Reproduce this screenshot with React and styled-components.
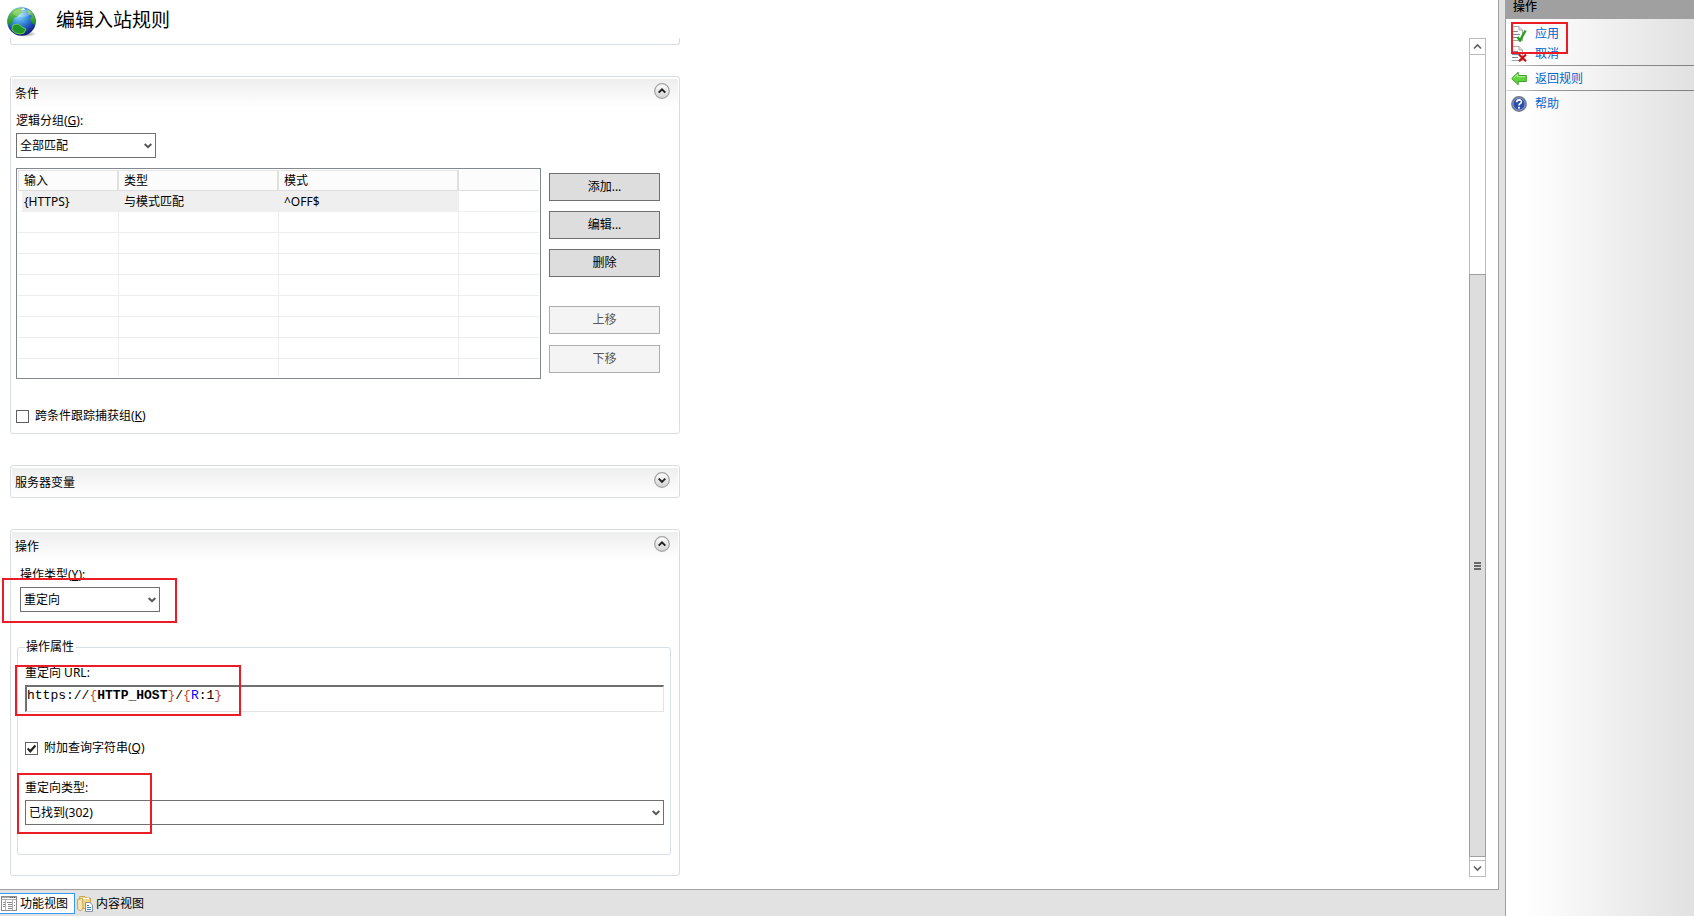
import { useState } from "react";
import { styled, css, createGlobalStyle } from "styled-components";

const GlobalStyle = createGlobalStyle`
    * {
        box-sizing: border-box;
    }

    body {
        margin: 0;
        background-color: rgb(226, 226, 226);
    }

    body, button, input, select {
        font-family: "Noto Sans", "Noto Sans CJK SC", sans-serif;
        font-size: 12px;
        line-height: 16px;
        color: rgb(0, 0, 0);
    }
`

const Shell = styled.div`
    display: flex;
    min-height: 100vh;
`

const Workspace = styled.main`
    flex: 1;
    min-width: 0;
    display: flex;
    flex-direction: column;
`

const Pane = styled.div`
    flex: 1;
    display: flex;
    flex-direction: column;
    margin-right: 6px;
    background-color: rgb(255, 255, 255);
    border-right: 1px solid rgb(160, 160, 160);
    border-bottom: 1px solid rgb(160, 160, 160);
`

const PaneHeader = styled.header`
    display: flex;
    align-items: center;
    gap: 18px;
    height: 38px;
    padding: 2px 0 0 7px;
`

const PaneTitle = styled.h1`
    margin: 0;
    font-size: 19px;
    line-height: 26px;
    font-weight: 400;
`

const Viewport = styled.div`
    flex: 1;
    display: flex;
    justify-content: space-between;
    gap: 12px;
    padding: 0 12px 12px 10px;
`

const Sections = styled.div`
    display: flex;
    flex-direction: column;
    gap: 31px;
    flex: 0 1 670px;
    min-width: 0;
`

const Panel = styled.section`
    padding: 2px 1px 1px;
    border: 1px solid rgb(215, 221, 228);
    border-radius: 3px;
`

// bottom edge of the section that is scrolled out of view
const PanelTail = styled.div`
    height: 7px;
    border: 1px solid rgb(215, 221, 228);
    border-top: none;
    border-radius: 0 0 3px 3px;
`

const PanelHeader = styled.div`
    display: flex;
    justify-content: space-between;
    align-items: flex-start;
    height: 28px;
    padding: 4px 8px 0 3px;
    background: linear-gradient(rgb(238, 238, 238), rgb(255, 255, 255));
`

const PanelTitle = styled.h2`
    margin: 0;
    padding-top: 3px;
    font-size: 12px;
    font-weight: 400;
`

const ToggleButton = styled.button`
    display: flex;
    padding: 0;
    border: none;
    background: none;
    cursor: pointer;
`

const PanelBody = styled.div`
    padding: 6px 18px 8px 4px;

    ${props =>
        props.$wide &&
        css`
        padding: 7px 7px 19px 5px;
    `
    }
`

const Field = styled.div`
    position: relative;

    ${props =>
        props.$indent &&
        css`
        margin-left: 3px;
    `
    }
`

const FieldLabel = styled.label`
    display: block;
    margin-bottom: 4px;
`

const SelectBox = styled.div`
    position: relative;
    width: ${props => (props.$full ? "100%" : "140px")};

    svg {
        position: absolute;
        right: 4px;
        top: 9px;
        pointer-events: none;
    }
`

const SelectControl = styled.select`
    display: block;
    width: 100%;
    height: 25px;
    padding: 0 20px 0 3px;
    appearance: none;
    border: 1px solid rgb(112, 112, 112);
    border-radius: 0;
    background-color: rgb(255, 255, 255);
`

const ConditionRow = styled.div`
    display: flex;
    gap: 8px;
    margin: 10px 0 29px;
`

const TableFrame = styled.div`
    flex: 1;
    min-width: 0;
    padding: 1px;
    border: 1px solid rgb(130, 135, 144);
`

const Table = styled.table`
    width: 100%;
    table-layout: fixed;
    border-collapse: separate;
    border-spacing: 0;
`

const HeadCell = styled.th`
    height: 21px;
    padding: 0 0 0 5px;
    text-align: left;
    font-weight: 400;
    background-color: rgb(252, 252, 252);
    border-top: 1px solid rgb(229, 229, 229);
    border-right: 2px solid rgb(224, 224, 224);
    border-bottom: 1px solid rgb(222, 222, 222);

    &:first-child {
        border-left: 1px solid rgb(229, 229, 229);
    }

    &:last-child {
        border-top-color: rgb(252, 252, 252);
        border-right: none;
    }
`

const Cell = styled.td`
    height: 21px;
    padding: 2px 0 0 5px;
    border-right: 1px solid rgb(237, 237, 237);
    border-bottom: 1px solid rgb(237, 237, 237);

    &:last-child {
        border-right: none;
    }

    tr:last-child > & {
        height: 18px;
        border-bottom: none;
    }

    ${props =>
        props.$selected &&
        css`
        background-color: rgb(239, 239, 239);
        border-color: rgb(239, 239, 239);

        &:first-child {
            padding-left: 2px;
            border-left: 4px solid rgb(255, 255, 255);
        }
    `
    }
`

const ButtonColumn = styled.div`
    display: flex;
    flex-direction: column;
    gap: 10px;
    width: 111px;
    padding-top: 5px;
`

const PushButton = styled.button`
    height: 28px;
    padding: 0;
    border: 1px solid rgb(112, 112, 112);
    background-color: rgb(221, 221, 221);

    &:disabled {
        color: rgb(90, 90, 90);
        border-color: rgb(173, 173, 173);
        background-color: rgb(244, 244, 244);
    }
`

const MoveButtons = styled.div`
    display: flex;
    flex-direction: column;
    gap: 11px;
    margin-top: 19px;

    button {
        width: 100%;
    }
`

const CheckRow = styled.div`
    display: flex;
    align-items: center;
    gap: 6px;
`

const CheckBox = styled.span`
    position: relative;
    display: flex;

    svg {
        position: absolute;
        left: 2px;
        top: 2px;
        display: none;
        pointer-events: none;
    }

    input:checked + svg {
        display: block;
    }
`

const CheckInput = styled.input`
    width: 13px;
    height: 13px;
    margin: 0;
    appearance: none;
    border: 1px solid rgb(96, 96, 96);
    background-color: rgb(255, 255, 255);
`

const Properties = styled.fieldset`
    min-width: 0;
    margin: 27px 0 0;
    padding: 10px 6px 29px 7px;
    border: 1px solid rgb(213, 223, 229);
    border-radius: 3px;
`

const Legend = styled.legend`
    padding: 0 2px 0 1px;
`

const PropertyStack = styled.div`
    display: flex;
    flex-direction: column;
`

const QueryOption = styled.div`
    margin: 28px 0 24px;
`

const UrlBox = styled.div`
    display: grid;
    height: 27px;
    border: 2px solid;
    border-width: 2px 1px 1px 2px;
    border-color: rgb(112, 112, 112) rgb(227, 227, 227) rgb(227, 227, 227) rgb(112, 112, 112);

    > * {
        grid-area: 1 / 1;
        height: 18px;
        padding: 0;
        font-family: "Liberation Mono", monospace;
        font-size: 13px;
        line-height: 18px;
    }
`

const UrlColors = styled.div`
    white-space: pre;

    b {
        font-weight: 700;
    }

    i {
        font-style: normal;
        color: rgb(200, 72, 48);
    }

    em {
        font-style: normal;
        color: rgb(0, 0, 255);
    }
`

const UrlInput = styled.input`
    min-width: 0;
    border: none;
    outline: none;
    background: none;
    color: transparent;
    caret-color: rgb(0, 0, 0);
`

// red outline drawn over a group of controls
const Highlight = styled.div`
    position: absolute;
    z-index: 1;
    left: ${props => props.$left}px;
    top: ${props => props.$top}px;
    width: ${props => props.$width}px;
    height: ${props => props.$height}px;
    border: 2px solid rgb(237, 28, 36);
    pointer-events: none;
`

const ScrollBar = styled.div`
    display: flex;
    flex-direction: column;
    flex: none;
    width: 17px;
    border: 1px solid rgb(187, 187, 187);
`

const ScrollButton = styled.button`
    display: flex;
    align-items: center;
    justify-content: center;
    height: 16px;
    padding: 0;
    border: 0 solid rgb(187, 187, 187);
    border-width: ${props => (props.$up ? "0 0 1px" : "1px 0 0")};
    background-color: rgb(255, 255, 255);
`

const ScrollSpace = styled.div`
    flex: 220;
`

const ScrollThumb = styled.div`
    flex: 582;
    display: flex;
    flex-direction: column;
    align-items: center;
    justify-content: center;
    gap: 1px;
    margin: 0 -1px 3px;
    border: 1px solid rgb(160, 160, 160);
    background-color: rgb(221, 221, 221);
`

const Grip = styled.span`
    width: 7px;
    height: 2px;
    background-color: rgb(104, 104, 104);
`

const ViewTabs = styled.footer`
    display: flex;
    align-items: center;
    gap: 1px;
    height: 26px;
`

const ViewTab = styled.button`
    display: flex;
    align-items: center;
    gap: 3px;
    height: 21px;
    padding: 1px 6px 0 1px;
    border: 1px solid transparent;
    border-left: none;
    background: none;

    ${props =>
        props.$active &&
        css`
        border-color: rgb(51, 153, 255);
        border-left: none;
        background-color: rgb(255, 255, 255);
    `
    }
`

const Sidebar = styled.aside`
    width: 189px;
    flex: none;
    border-left: 1px solid rgb(160, 160, 160);
    background: linear-gradient(to right, rgb(255, 255, 255) 10%, rgb(225, 225, 225));
`

const SidebarTitle = styled.h2`
    height: 19px;
    margin: 0;
    padding-left: 7px;
    font-size: 12px;
    line-height: 14px;
    font-weight: 500;
    background-color: rgb(160, 160, 160);
`

const ActionList = styled.ul`
    margin: 0;
    padding: 4px 0 0;
    list-style: none;
`

const ActionItem = styled.li`
    position: relative;
    padding-left: 5px;

    ${props =>
        props.$divided &&
        css`
        padding-bottom: 2px;
        margin-bottom: 2px;
        border-bottom: 1px solid;
        border-image: linear-gradient(to right, rgb(220, 220, 220), rgb(150, 150, 150) 20%, rgb(128, 128, 128)) 1;
    `
    }
`

const ActionLink = styled.a`
    display: flex;
    align-items: center;
    gap: 8px;
    height: 20px;
    padding-top: 2px;
    color: rgb(0, 102, 204);
    text-decoration: none;
`

const GlobeIcon = () => (
    <svg width="31" height="34" viewBox="0 -4 31 34" aria-hidden="true">
        <defs>
            <radialGradient id="sea" cx="0.4" cy="0.25" r="0.75">
                <stop offset="0" stopColor="#a9e6fb" />
                <stop offset="0.4" stopColor="#4099e2" />
                <stop offset="0.75" stopColor="#1e4cb8" />
                <stop offset="1" stopColor="#101f78" />
            </radialGradient>
            <radialGradient id="shade">
                <stop offset="0" stopColor="#555" stopOpacity="0.7" />
                <stop offset="1" stopColor="#555" stopOpacity="0" />
            </radialGradient>
            <linearGradient id="land" x1="0" y1="0" x2="0" y2="1">
                <stop offset="0" stopColor="#8ad650" />
                <stop offset="1" stopColor="#128a24" />
            </linearGradient>
        </defs>
        <ellipse cx="18" cy="27" rx="12" ry="3" fill="url(#shade)" />
        <circle cx="14.5" cy="14.5" r="14.3" fill="url(#sea)" />
        <path d="M3 7 Q7 1 13 1 L16 2 L14 4 L17 5 L13 7 L11 9 L7 11 L5 16 L2 19 Q-1 13 3 7Z" fill="url(#land)" />
        <path d="M20 2 Q27 5 28.5 13 L28 18 L25 16 L23 12 L25 9 L21 6Z" fill="url(#land)" />
        <path d="M6 18 L11 17 L15 20 L19 22 L17 26 L13 27 Q8 27 5 23Z" fill="#21952d" stroke="#6fc949" strokeWidth="1" />
        <path d="M14 2 L15 3 L18 3 L17 1Z" fill="#f4fbe8" />
        <ellipse cx="15" cy="6" rx="9" ry="4" fill="#fff" opacity="0.25" />
    </svg>
)

const Chevron = () => (
    <svg width="8" height="8" viewBox="0 0 8 8" aria-hidden="true">
        <path d="M0.7 2 L4 5.2 L7.3 2" fill="none" stroke="#555" strokeWidth="2" />
    </svg>
)

const ToggleIcon = ({ open }) => (
    <svg width="16" height="16" viewBox="0 0 16 16" aria-hidden="true">
        <defs>
            <linearGradient id="knob" x1="0" y1="0" x2="0" y2="1">
                <stop offset="0" stopColor="#fff" />
                <stop offset="1" stopColor="#d2d2d2" />
            </linearGradient>
        </defs>
        <circle cx="8" cy="8" r="7.3" fill="url(#knob)" stroke="#a3a3a3" strokeWidth="1.2" />
        <path
            d={open ? "M4.7 9.6 L8 6.3 L11.3 9.6" : "M4.7 6.6 L8 9.9 L11.3 6.6"}
            fill="none"
            stroke="#222"
            strokeWidth="2"
        />
    </svg>
)

const ScrollArrow = ({ up }) => (
    <svg width="9" height="7" viewBox="0 0 9 7" aria-hidden="true">
        <path d={up ? "M1 5.5 L4.5 2 L8 5.5" : "M1 1.5 L4.5 5 L8 1.5"} fill="none" stroke="#606060" strokeWidth="1.6" />
    </svg>
)

const CheckMark = () => (
    <svg width="9" height="9" viewBox="0 0 9 9" aria-hidden="true">
        <path d="M0.6 4.4 L3.3 7.3 L8.4 1.4" fill="none" stroke="#222" strokeWidth="2.2" />
    </svg>
)

const PageShape = () => (
    <>
        <path d="M0.5 0.5 H8 L11.5 4 V14.5 H0.5" fill="#fbfbfb" stroke="#a8a8a8" />
        <path d="M8 0.5 V4 H11.5" fill="#e8e8e8" stroke="#a8a8a8" />
        <path d="M1 5.5 H7 M1 8.5 H9 M1 11.5 H7" stroke="#7588a6" />
    </>
)

const ApplyIcon = () => (
    <svg width="16" height="16" viewBox="0 0 16 16" aria-hidden="true">
        <PageShape />
        <path d="M6.5 11 L9 14.5 L14.5 4.5" fill="none" stroke="#24a51c" strokeWidth="2.4" />
    </svg>
)

const CancelIcon = () => (
    <svg width="16" height="16" viewBox="0 0 16 16" aria-hidden="true">
        <PageShape />
        <path d="M8 8.5 L15 15.3 M15 8.5 L8 15.3" stroke="#cc1111" strokeWidth="2.2" />
    </svg>
)

const BackIcon = () => (
    <svg width="16" height="16" viewBox="0 0 16 16" aria-hidden="true">
        <path d="M0.7 7.5 L7.2 1.2 V4.5 H15.3 V10.5 H7.2 V13.8Z" fill="#5fd43c" stroke="#3c9e27" />
        <path d="M2.5 7.2 L6.5 3.5 V5.7 H14" fill="none" stroke="#b6f39f" />
    </svg>
)

const HelpIcon = () => (
    <svg width="16" height="16" viewBox="0 0 16 16" aria-hidden="true">
        <circle cx="8" cy="8" r="7.2" fill="#2b4ea8" stroke="#777c88" strokeWidth="1.4" />
        <circle cx="8" cy="8" r="6" fill="none" stroke="#9fb5e5" strokeWidth="0.8" />
        <path d="M5.6 6.3 Q5.8 3.9 8.1 3.9 Q10.5 4 10.4 6 Q10.3 7.2 8.9 7.8 Q8 8.3 8 9.6" fill="none" stroke="#fff" strokeWidth="1.6" />
        <rect x="7.1" y="10.8" width="1.8" height="1.8" fill="#fff" />
    </svg>
)

const FeaturesIcon = () => (
    <svg width="16" height="16" viewBox="0 0 16 16" aria-hidden="true">
        <rect x="0.5" y="0.5" width="15" height="14" fill="#fff" stroke="#8c8c8c" />
        <path d="M1 1.5 H15" stroke="#a9a9a9" />
        <path d="M9 1.5 H14" stroke="#555" strokeDasharray="1 1" />
        <path d="M1 3.5 H15 M4.5 4 V14 M11.5 4 V14" stroke="#b0b0b0" />
        <path d="M2 6.5 H4 M2 8.5 H4 M2 10.5 H4 M6 6.5 H11 M7 8.5 H11 M7 10.5 H11 M7 12.5 H11 M13 6.5 H14 M13 9.5 H14" stroke="#8a8a8a" />
    </svg>
)

const ContentIcon = () => (
    <svg width="16" height="16" viewBox="0 0 16 16" aria-hidden="true">
        <path d="M2.5 0.5 H8 L9 2 H13.5 V12.5 H2.5Z" fill="#f2d68c" stroke="#cda653" />
        <path d="M5 2.5 H12" stroke="#fff" />
        <path d="M0.5 3.5 L5.5 2.5 L6 12 L3.5 15 L0.5 13Z" fill="#f8e6b1" stroke="#cda653" />
        <path d="M8.5 6.5 H13 L15.5 9 V15.5 H8.5Z" fill="#fff" stroke="#8793a5" />
        <path d="M10 9.5 H12 M10 11.5 H14 M10 13.5 H14" stroke="#3b80ce" />
    </svg>
)

const Select = ({ id, value, full }) => (
    <SelectBox $full={full}>
        <SelectControl id={id} defaultValue={value}>
            <option>{value}</option>
        </SelectControl>
        <Chevron />
    </SelectBox>
)

const Check = ({ id, checked, children }) => (
    <CheckRow>
        <CheckBox>
            <CheckInput id={id} type="checkbox" defaultChecked={checked} />
            <CheckMark />
        </CheckBox>
        <label htmlFor={id}>{children}</label>
    </CheckRow>
)

const Section = ({ title, initialOpen = false, wide, children }) => {
    const [open, setOpen] = useState(initialOpen);

    return (
        <Panel>
            <PanelHeader>
                <PanelTitle>{title}</PanelTitle>
                <ToggleButton aria-label={title} aria-expanded={open} onClick={() => setOpen(!open)}>
                    <ToggleIcon open={open} />
                </ToggleButton>
            </PanelHeader>
            {open && children && <PanelBody $wide={wide}>{children}</PanelBody>}
        </Panel>
    )
}

const conditions = [["{HTTPS}", "与模式匹配", "^OFF$"]];
const emptyRows = Array.from({ length: 8 });

const ConditionTable = () => (
    <TableFrame>
        <Table>
            <colgroup>
                <col width="101" />
                <col width="160" />
                <col width="180" />
                <col />
            </colgroup>
            <thead>
                <tr>
                    <HeadCell>输入</HeadCell>
                    <HeadCell>类型</HeadCell>
                    <HeadCell>模式</HeadCell>
                    <HeadCell />
                </tr>
            </thead>
            <tbody>
                {conditions.map(row => (
                    <tr key={row[0]}>
                        {row.map(text => <Cell key={text} $selected>{text}</Cell>)}
                        <Cell />
                    </tr>
                ))}
                {emptyRows.map((_, index) => (
                    <tr key={index}>
                        <Cell />
                        <Cell />
                        <Cell />
                        <Cell />
                    </tr>
                ))}
            </tbody>
        </Table>
    </TableFrame>
)

// splits the url into plain text, braces, server variables and back references
const colorUrl = url =>
    url.split(/([{}]|HTTP_HOST|R(?=:))/).map((part, index) => {
        if (part === "{" || part === "}") return <i key={index}>{part}</i>;
        if (part === "HTTP_HOST") return <b key={index}>{part}</b>;
        if (part === "R") return <em key={index}>{part}</em>;
        return part;
    });

const UrlField = () => {
    const [url, setUrl] = useState("https://{HTTP_HOST}/{R:1}");

    return (
        <UrlBox>
            <UrlColors aria-hidden="true">{colorUrl(url)}</UrlColors>
            <UrlInput id="url" value={url} spellCheck={false} onChange={e => setUrl(e.target.value)} />
        </UrlBox>
    )
}

const App = () => {
    return (
        <>
            <GlobalStyle />
            <Shell>
                <Workspace>
                    <Pane>
                        <PaneHeader>
                            <GlobeIcon />
                            <PaneTitle>编辑入站规则</PaneTitle>
                        </PaneHeader>
                        <Viewport>
                            <Sections>
                                <PanelTail />
                                <Section title="条件" initialOpen>
                                    <Field>
                                        <FieldLabel htmlFor="grouping">逻辑分组(<u>G</u>):</FieldLabel>
                                        <Select id="grouping" value="全部匹配" />
                                    </Field>
                                    <ConditionRow>
                                        <ConditionTable />
                                        <ButtonColumn>
                                            <PushButton>添加...</PushButton>
                                            <PushButton>编辑...</PushButton>
                                            <PushButton>删除</PushButton>
                                            <MoveButtons>
                                                <PushButton disabled>上移</PushButton>
                                                <PushButton disabled>下移</PushButton>
                                            </MoveButtons>
                                        </ButtonColumn>
                                    </ConditionRow>
                                    <Check id="track">跨条件跟踪捕获组(<u>K</u>)</Check>
                                </Section>
                                <Section title="服务器变量" />
                                <Section title="操作" initialOpen wide>
                                    <Field $indent>
                                        <FieldLabel htmlFor="action">操作类型(<u>Y</u>):</FieldLabel>
                                        <Select id="action" value="重定向" />
                                        <Highlight $left={-18} $top={11} $width={175} $height={45} />
                                    </Field>
                                    <Properties>
                                        <Legend>操作属性</Legend>
                                        <PropertyStack>
                                            <Field>
                                                <FieldLabel htmlFor="url">重定向 URL:</FieldLabel>
                                                <UrlField />
                                                <Highlight $left={-10} $top={0} $width={226} $height={51} />
                                            </Field>
                                            <QueryOption>
                                                <Check id="query" checked>附加查询字符串(<u>Q</u>)</Check>
                                            </QueryOption>
                                            <Field>
                                                <FieldLabel htmlFor="redirect">重定向类型:</FieldLabel>
                                                <Select id="redirect" value="已找到(302)" full />
                                                <Highlight $left={-8} $top={-7} $width={135} $height={61} />
                                            </Field>
                                        </PropertyStack>
                                    </Properties>
                                </Section>
                            </Sections>
                            <ScrollBar>
                                <ScrollButton $up aria-label="向上滚动"><ScrollArrow up /></ScrollButton>
                                <ScrollSpace />
                                <ScrollThumb>
                                    <Grip />
                                    <Grip />
                                    <Grip />
                                </ScrollThumb>
                                <ScrollButton aria-label="向下滚动"><ScrollArrow /></ScrollButton>
                            </ScrollBar>
                        </Viewport>
                    </Pane>
                    <ViewTabs>
                        <ViewTab $active><FeaturesIcon />功能视图</ViewTab>
                        <ViewTab><ContentIcon />内容视图</ViewTab>
                    </ViewTabs>
                </Workspace>
                <Sidebar>
                    <SidebarTitle>操作</SidebarTitle>
                    <ActionList>
                        <ActionItem>
                            <ActionLink href="#apply"><ApplyIcon />应用</ActionLink>
                            <Highlight $left={5} $top={-1} $width={57} $height={32} />
                        </ActionItem>
                        <ActionItem $divided>
                            <ActionLink href="#cancel"><CancelIcon />取消</ActionLink>
                        </ActionItem>
                        <ActionItem $divided>
                            <ActionLink href="#rules"><BackIcon />返回规则</ActionLink>
                        </ActionItem>
                        <ActionItem>
                            <ActionLink href="#help"><HelpIcon />帮助</ActionLink>
                        </ActionItem>
                    </ActionList>
                </Sidebar>
            </Shell>
        </>
    )
}

export default App;
